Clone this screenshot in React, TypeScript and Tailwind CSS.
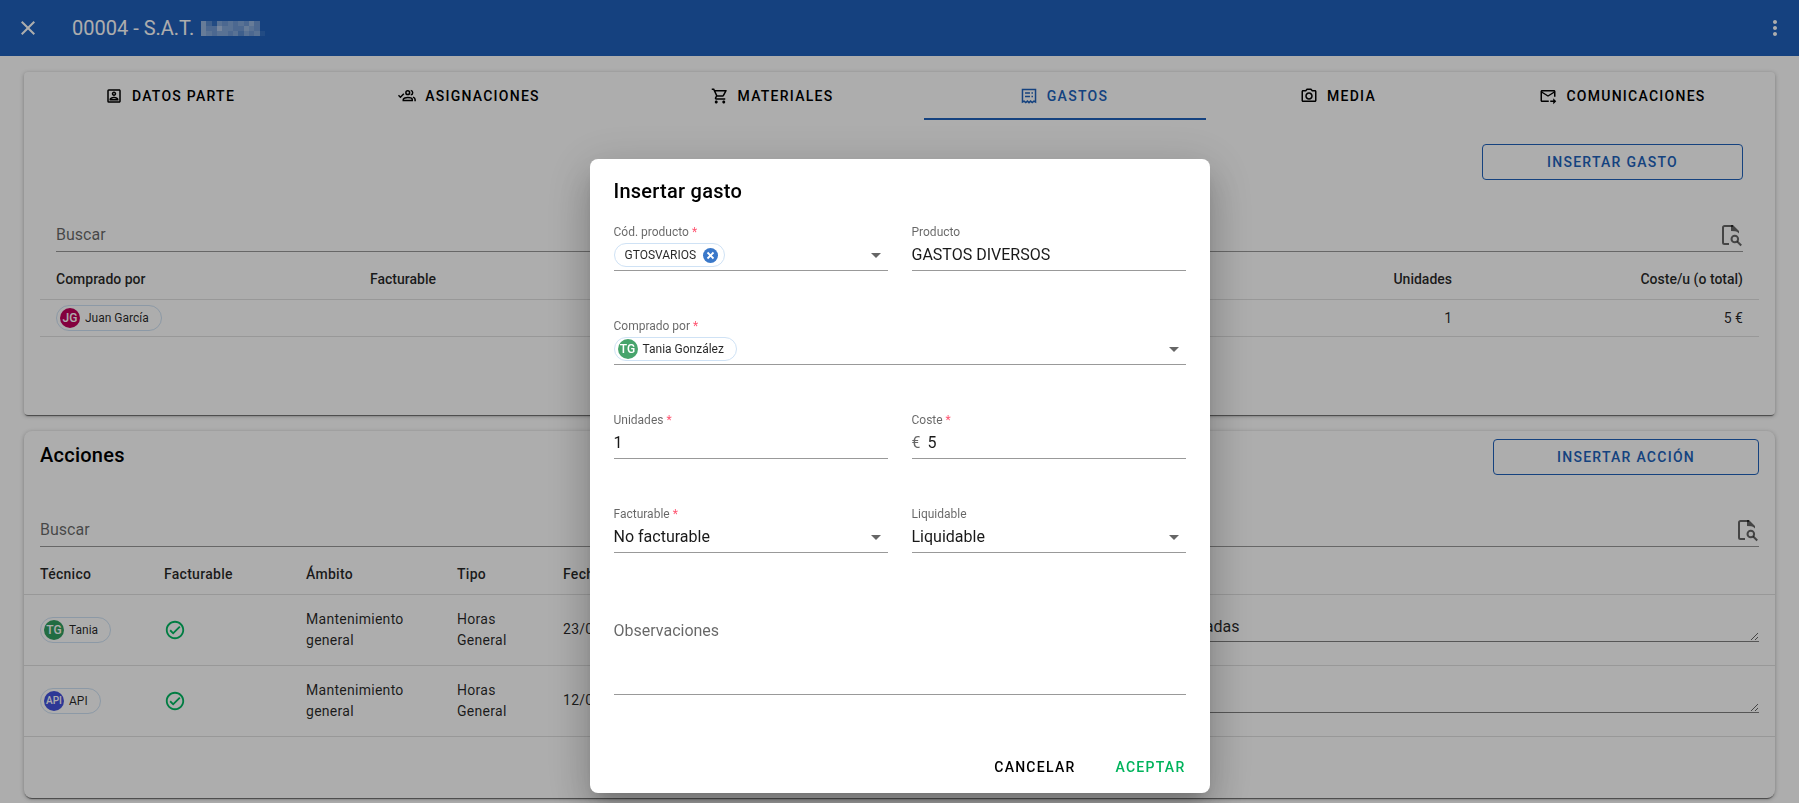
import type { ReactNode } from "react";
import {
  MdClose,
  MdMoreVert,
  MdOutlineCameraAlt,
  MdOutlineCheckCircle,
  MdOutlineForwardToInbox,
  MdOutlinePortrait,
  MdOutlineShoppingCart,
} from "react-icons/md";

function AssignIcon() {
  return (
    <svg viewBox="0 0 24 24" className="size-[18px]" fill="none" stroke="currentColor" strokeWidth="2">
      <path d="M0.600 11l2.600 2.600 4.600-4.600" />
      <circle cx="13" cy="7.500" r="2.500" />
      <path d="M17 4.500c1.700.3 2.600 1.600 2.600 3s-.9 2.700-2.600 3" />
      <path d="M7 18v-1.200c0-1.800 3.500-2.800 6-2.800s6 1 6 2.800V18z" />
      <path d="M20 13.500c1.800.8 2.800 1.700 2.800 3.200V19" />
    </svg>
  );
}

function ReceiptIcon() {
  return (
    <svg viewBox="0 0 24 24" className="size-[18px]" fill="none" stroke="currentColor" strokeWidth="2">
      <path d="M3.300 20V3.300h17.400V20l-2.200-1.200-2.200 2-2.200-2-2.100 2-2.100-2-2.200 2-2.200-2z" />
      <path d="M6.700 8h6.600M6.700 12.500h6.600M15.300 8h2M15.300 12.500h2" />
    </svg>
  );
}

function FindInPageIcon() {
  return (
    <svg viewBox="0 0 24 24" className="size-6 shrink-0 text-black/60" fill="none" stroke="currentColor" strokeWidth="2">
      <path d="M10 21H5.500A1.500 1.500 0 0 1 4 19.500v-15A1.500 1.500 0 0 1 5.500 3H14" />
      <path d="M12 2h2l6 6v2.500c-1-1.200-2.300-2-4-2.200L12 8z" fill="currentColor" stroke="none" />
      <circle cx="15.800" cy="16" r="3.300" />
      <path d="M18.200 18.500l4 4" />
    </svg>
  );
}

function Caret() {
  return (
    <svg viewBox="0 0 10 5" className="pointer-events-none mr-[7px] h-[5px] w-2.5 shrink-0 fill-black/60">
      <path d="M0 0h10L5 5z" />
    </svg>
  );
}

function RemoveIcon() {
  return (
    <svg viewBox="0 0 15 15" className="size-[15px]" fill="none" stroke="#ffffff" strokeWidth="1.800">
      <path d="M4.500 4.500l6 6M10.500 4.500l-6 6" />
    </svg>
  );
}

/* Obscured customer name: each digit is the strength of one block. */
const MOSAIC = ["631545454640", "644755446540", "654554535451"];

function HiddenName() {
  return (
    <svg viewBox="0 0 60 15" className="h-[15px] w-16" preserveAspectRatio="none" shapeRendering="crispEdges" aria-hidden="true">
      {MOSAIC.map((row, y) =>
        row.split("").map((v, x) => (
          <rect key={`${x}-${y}`} x={x * 5} y={y * 5} width="5" height="5" fill="#ffffff" opacity={Number(v) / 11} />
        )),
      )}
    </svg>
  );
}

const TABS: { label: string; icon: ReactNode; active?: boolean }[] = [
  { label: "DATOS PARTE", icon: <MdOutlinePortrait size={18} /> },
  { label: "ASIGNACIONES", icon: <AssignIcon /> },
  { label: "MATERIALES", icon: <MdOutlineShoppingCart size={18} /> },
  { label: "GASTOS", icon: <ReceiptIcon />, active: true },
  { label: "MEDIA", icon: <MdOutlineCameraAlt size={18} /> },
  { label: "COMUNICACIONES", icon: <MdOutlineForwardToInbox size={18} /> },
];

function PersonChip({ initials, name, color, small }: { initials: string; name: string; color: string; small?: boolean }) {
  return (
    <span
      className={`inline-flex items-center gap-[5px] rounded-full border border-[#cfe2f5] pr-3 pl-[3px] text-xs text-black/85 ${small ? "h-6" : "h-[26px]"}`}
    >
      <span
        className={`flex size-5 items-center justify-center rounded-full font-medium text-white ${color} ${initials.length > 2 ? "text-[10px]" : "text-xs"}`}
      >
        {initials}
      </span>
      {name}
    </span>
  );
}

function Search({ id }: { id: string }) {
  return (
    <div className="flex h-10 items-center border-b border-black/40 pt-1.5">
      <input
        id={id}
        aria-label="Buscar"
        placeholder="Buscar"
        className="min-w-0 flex-1 bg-transparent text-base outline-none placeholder:text-black/60"
      />
      <FindInPageIcon />
    </div>
  );
}

function OutlineButton({ children, width }: { children: ReactNode; width: string }) {
  return (
    <button
      type="button"
      className={`h-9 rounded border border-[#2062bb] text-sm font-medium tracking-[0.09em] text-[#2062bb] ${width}`}
    >
      {children}
    </button>
  );
}

function Field({
  label,
  id,
  required,
  wide,
  children,
}: {
  label: string;
  id: string;
  required?: boolean;
  wide?: boolean;
  children: ReactNode;
}) {
  return (
    <div className={`flex h-14 flex-col border-b border-black/40 ${wide ? "col-span-2" : ""}`}>
      <label htmlFor={id} className="pt-[9px] text-xs text-black/60">
        {label}
        {required && <span className="text-[#ff5470]"> *</span>}
      </label>
      <div className="flex h-[30px] items-center text-base text-black/90">{children}</div>
    </div>
  );
}

const ACTIONS = [
  { initials: "TG", name: "Tania", color: "bg-[#31a062]", date: "23/05/2023", note: "Horas realizadas" },
  { initials: "API", name: "API", color: "bg-[#4353dd]", date: "12/05/2023", note: "" },
];

export default function App() {
  return (
    <div className="min-h-screen bg-white font-[Roboto,sans-serif] text-black">
      <header className="flex h-14 items-center bg-[#1f61bc] px-3 text-white">
        <button type="button" aria-label="Cerrar" className="p-1">
          <MdClose size={24} />
        </button>
        <h1 className="ml-7 flex items-center gap-[7px] text-xl">
          00004 - S.A.T. <HiddenName />
        </h1>
        <button type="button" aria-label="Más opciones" className="ml-auto">
          <MdMoreVert size={24} />
        </button>
      </header>

      <main className="flex flex-col gap-4 px-6 pt-4">
        <section className="h-[343px] rounded bg-white shadow-[0_2px_1px_-1px_rgba(0,0,0,0.5),0_1px_4px_rgba(0,0,0,0.3)]">
          <nav className="grid grid-cols-[294fr_304fr_302fr_282fr_266fr_303fr]">
            {TABS.map((t) => (
              <button
                key={t.label}
                type="button"
                className={`flex h-12 items-center justify-center gap-[9px] border-b-2 pt-0.5 pr-0.5 text-sm font-medium tracking-[0.09em] ${t.active ? "border-[#2062bb] text-[#2062bb]" : "border-transparent"}`}
              >
                {t.icon}
                {t.label}
              </button>
            ))}
          </nav>
          <div className="px-4 pt-6">
            <div className="px-4">
              <div className="mb-8 flex justify-end">
                <OutlineButton width="w-[261px]">INSERTAR GASTO</OutlineButton>
              </div>
              <Search id="buscar-gasto" />
            </div>
            <table className="w-full table-fixed text-sm">
              <thead>
                <tr className="h-[47px] border-b border-black/12 text-black/85">
                  <th className="w-[314px] px-4 pt-2 text-left font-medium">Comprado por</th>
                  <th className="px-4 pt-2 text-left font-medium">Facturable</th>
                  <th className="px-4 pt-2 text-left font-medium">Producto</th>
                  <th className="w-[290px] px-4 pt-2 text-right font-medium">Unidades</th>
                  <th className="w-[291px] px-4 pt-2 text-right font-medium">Coste/u (o total)</th>
                </tr>
              </thead>
              <tbody>
                <tr className="h-[37px] border-b border-black/12 text-black/85">
                  <td className="px-4">
                    <div className="flex">
                      <PersonChip initials="JG" name="Juan García" color="bg-[#c3005c]" />
                    </div>
                  </td>
                  <td />
                  <td />
                  <td className="px-4 text-right">1</td>
                  <td className="px-4 text-right">5 €</td>
                </tr>
              </tbody>
            </table>
          </div>
        </section>

        <section className="h-[367px] rounded-lg bg-white pt-2 shadow-[0_2px_1px_-1px_rgba(0,0,0,0.5),0_1px_4px_rgba(0,0,0,0.3)]">
          <div className="px-4">
            <div className="mb-8 flex items-start justify-between">
              <h2 className="text-xl leading-8 font-medium tracking-[0.0125em]">Acciones</h2>
              <OutlineButton width="w-[266px]">INSERTAR ACCIÓN</OutlineButton>
            </div>
            <Search id="buscar-accion" />
          </div>
          <table className="w-full table-fixed text-sm tracking-[0.02em]">
            <thead>
              <tr className="h-[47px] border-b border-black/12 text-left text-black/85">
                <th className="w-[124px] pt-2 pl-4 font-medium">Técnico</th>
                <th className="w-[142px] pt-2 pl-4 font-medium">Facturable</th>
                <th className="w-[151px] pt-2 pl-4 font-medium">Ámbito</th>
                <th className="w-[106px] pt-2 pl-4 font-medium">Tipo</th>
                <th className="pt-2 pl-4 font-medium">Fecha</th>
                <th className="w-[671px]" />
              </tr>
            </thead>
            <tbody>
              {ACTIONS.map((a) => (
                <tr key={a.name} className="h-[71px] border-b border-black/12 leading-[21px] text-black/85">
                  <td className="pl-4 tracking-normal">
                    <div className="flex">
                      <PersonChip initials={a.initials} name={a.name} color={a.color} />
                    </div>
                  </td>
                  <td className="pl-4">
                    <MdOutlineCheckCircle size={22} className="text-[#00b862]" aria-label="Sí" />
                  </td>
                  <td className="pl-4">
                    Mantenimiento
                    <br />
                    general
                  </td>
                  <td className="pl-4">
                    Horas
                    <br />
                    General
                  </td>
                  <td className="pl-4">{a.date}</td>
                  <td className="px-4 tracking-normal">
                    <textarea
                      aria-label={`Observaciones de ${a.name}`}
                      defaultValue={a.note}
                      rows={1}
                      className="mb-1.5 block h-[30px] w-full border-b border-black/50 bg-transparent pt-[5px] text-base leading-5 outline-none"
                    />
                  </td>
                </tr>
              ))}
            </tbody>
          </table>
        </section>
      </main>

      <div className="fixed inset-0 flex items-end justify-center bg-black/32 pb-2.5">
        <div
          role="dialog"
          aria-modal="true"
          aria-labelledby="dialog-title"
          className="w-[620px] rounded-lg bg-white px-6 shadow-[0_11px_15px_-7px_rgba(0,0,0,0.2),0_24px_38px_3px_rgba(0,0,0,0.14),0_9px_46px_8px_rgba(0,0,0,0.12)]"
        >
          <h2 id="dialog-title" className="h-14 pt-4 text-xl leading-8 font-medium tracking-[0.0125em]">
            Insertar gasto
          </h2>
          <form className="grid grid-cols-2 gap-x-6 gap-y-[38px]">
            <Field label="Cód. producto" id="codigo" required>
              <span className="inline-flex h-6 items-center gap-[7px] rounded-full border border-[#cfe2f5] pr-1.5 pl-2.5 text-xs text-black/85">
                GTOSVARIOS
                <button type="button" aria-label="Quitar GTOSVARIOS" className="rounded-full bg-[#3a78c9]">
                  <RemoveIcon />
                </button>
              </span>
              <input id="codigo" className="min-w-0 flex-1 bg-transparent outline-none" />
              <Caret />
            </Field>
            <Field label="Producto" id="producto">
              <input id="producto" defaultValue="GASTOS DIVERSOS" className="w-full bg-transparent outline-none" />
            </Field>
            <Field label="Comprado por" id="comprador" required wide>
              <PersonChip initials="TG" name="Tania González" color="bg-[#47a46b]" small />
              <input id="comprador" className="min-w-0 flex-1 bg-transparent outline-none" />
              <Caret />
            </Field>
            <Field label="Unidades" id="unidades" required>
              <input id="unidades" defaultValue="1" className="w-full bg-transparent outline-none" />
            </Field>
            <Field label="Coste" id="coste" required>
              <span className="w-4 text-black/60">€</span>
              <input id="coste" defaultValue="5" className="min-w-0 flex-1 bg-transparent outline-none" />
            </Field>
            <Field label="Facturable" id="facturable" required>
              <select id="facturable" className="min-w-0 flex-1 appearance-none bg-transparent outline-none">
                <option>No facturable</option>
              </select>
              <Caret />
            </Field>
            <Field label="Liquidable" id="liquidable">
              <select id="liquidable" className="min-w-0 flex-1 appearance-none bg-transparent outline-none">
                <option>Liquidable</option>
              </select>
              <Caret />
            </Field>
            <textarea
              aria-label="Observaciones"
              placeholder="Observaciones"
              className="col-span-2 h-[104px] resize-none border-b border-black/40 bg-transparent pt-7 text-base outline-none placeholder:text-black/60"
            />
          </form>
          <div className="flex h-[98px] items-end justify-end gap-10 pb-2">
            <button type="button" className="h-9 text-sm font-medium tracking-[0.09em]">
              CANCELAR
            </button>
            <button type="button" className="h-9 text-sm font-medium tracking-[0.09em] text-[#00b35c]">
              ACEPTAR
            </button>
          </div>
        </div>
      </div>
    </div>
  );
}
